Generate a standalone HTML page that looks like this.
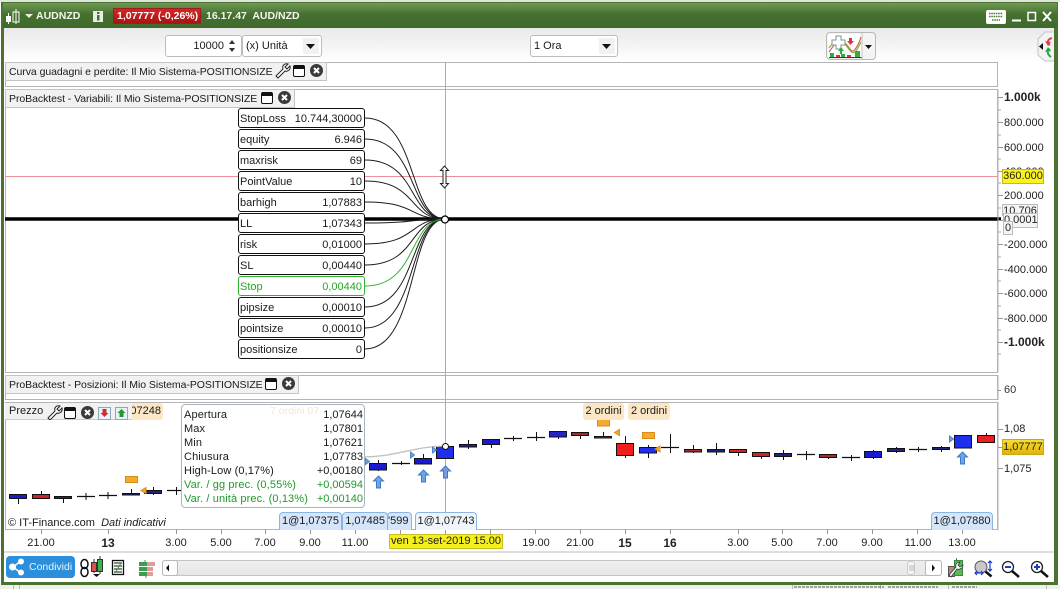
<!DOCTYPE html>
<html><head><meta charset="utf-8"><style>
html,body{margin:0;padding:0;background:#fff}
body{position:relative;width:1060px;height:589px;overflow:hidden;font-family:"Liberation Sans",sans-serif;font-size:10.5px;color:#1a1a1a}
div,span.t{position:absolute;box-sizing:border-box}
.t{white-space:nowrap;line-height:14px}
.h{letter-spacing:-.06px}
.o{font-size:11px;letter-spacing:.12px}
.v{font-size:11px}
.pan{background:#fff;border:1px solid #b4b4b4}
.hd{background:#f1f1f1;border:1px solid #c4c4c4;height:19px}
.box{left:238px;width:127px;height:20px;border:1px solid #111;border-radius:3px;background:#fff;line-height:20px;padding:0 2px 0 1px;font-size:11px}
.box b{font-weight:normal;float:right}
.ax{left:1004px;white-space:nowrap;line-height:14px;font-size:11px;color:#222}
.tm{top:536px;white-space:nowrap;line-height:14px;font-size:11px;color:#222;transform:translateX(-50%)}
.tag{height:18px;top:512px;background:#d5e5fa;border:1px solid #8ab4e6;border-bottom:0;border-radius:4px 4px 0 0;font-size:11px;line-height:17px;text-align:center;white-space:nowrap;overflow:hidden}
.ord{background:#fbe7c6;border-radius:3px;height:17px;line-height:16px;font-size:11px;text-align:center;white-space:nowrap}
.dd{background:#fff;border:1px solid #bdbdbd;border-radius:3px;height:22px;top:35px;line-height:20px;font-size:11px}
.tw{position:absolute}
</style></head><body>
<div style="left:0;top:0;width:1060px;height:2px;background:#dfe6da"></div>
<div style="left:1px;top:2px;width:1057px;height:583px;background:#4a7332"></div>
<div style="left:3px;top:3px;width:1054px;height:25px;background:linear-gradient(#6f9a54,#457030 45%,#3f6a2c)"></div>
<div style="left:4px;top:28px;width:1050px;height:554px;background:#fff"></div>
<div style="left:4px;top:28px;width:1050px;height:34px;background:linear-gradient(#e9e9e9,#fff)"></div>
<div style="left:0;top:585px;width:1060px;height:4px;background:#eef0ee"></div>
<svg class="tw" style="left:0;top:585px" width="1060" height="4"><path d="M13.500 0v4M19.500 0v4M792.500 0v4M880.500 0v4M948.500 0v4M1046.500 0v4" stroke="#bbb"/><path d="M794 2h90M888 2h50M952 2h25" stroke="#555" stroke-dasharray="3 1"/></svg>

<!-- title -->
<svg class="tw" style="left:0;top:0" width="1060" height="30">
<rect x="6" y="16" width="5" height="6" fill="#fff"/><rect x="13" y="12" width="6" height="10" fill="none" stroke="#fff"/><path d="M8.500 13v11M16 9v15" stroke="#fff"/>
<path d="M25 14h8l-4 4z" fill="#e8f0e4"/>
<rect x="93" y="11" width="10" height="11" fill="#e8ece4"/><rect x="97" y="12" width="2.500" height="2" fill="#457030"/><rect x="97" y="15" width="2.500" height="5.500" fill="#457030"/>
<rect x="986" y="10" width="20" height="14" rx="2" fill="#fff"/><path d="M989 13.500h14M989 16.500h14M992 20h8" stroke="#4a7332" stroke-width="1.500" stroke-dasharray="1.500 .8"/>
<path d="M1012 20.500h9" stroke="#fff" stroke-width="2"/><rect x="1028" y="12.500" width="7.500" height="8" fill="none" stroke="#fff" stroke-width="1.500"/><path d="M1043 12l8 9M1051 12l-8 9" stroke="#fff" stroke-width="2"/>
</svg>
<span class="t" style="left:36px;top:9px;color:#f2f6ee;font-weight:bold;font-size:10.500px">AUDNZD</span>
<div style="left:113px;top:8px;width:88px;height:16px;background:linear-gradient(#d92424,#a81414);border:1px solid #9a2020"></div>
<span class="t" style="left:117px;top:9px;color:#fff;font-weight:bold;font-size:10.500px">1,07777 (-0,26%)</span>
<span class="t" style="left:206px;top:9px;color:#f2f6ee;font-weight:bold;font-size:10.500px">16.17.47&nbsp; AUD/NZD</span>

<!-- toolbar -->
<div class="dd" style="left:165px;width:77px;text-align:right;padding-right:17px">10000</div>
<svg class="tw" style="left:226px;top:38px" width="12" height="16"><path d="M3 6l3-4 3 4zM3 10l3 4 3-4z" fill="#333"/></svg>
<div class="dd" style="left:242px;width:80px;padding-left:3px">(x) Unità</div>
<div class="dd" style="left:530px;width:88px;padding-left:3px">1 Ora</div>
<div style="left:303px;top:38px;width:16px;height:16px;background:#f1f1f1"></div>
<div style="left:599px;top:38px;width:16px;height:16px;background:#f1f1f1"></div>
<svg class="tw" style="left:303px;top:38px" width="16" height="16"><path d="M3 6h9l-4.500 5z" fill="#111"/></svg>
<svg class="tw" style="left:599px;top:38px" width="16" height="16"><path d="M3 6h9l-4.500 5z" fill="#111"/></svg>
<div style="left:826px;top:32px;width:50px;height:28px;background:#f4f4f4;border:1px solid #b8b8b8;border-radius:4px"></div>
<svg class="tw" style="left:826px;top:32px" width="52" height="28">
<rect x="2" y="2" width="34" height="24" fill="#fff"/>
<path d="M3 20C10 10 14 5 20 12S26 22 30 16 34 8 35 5" fill="none" stroke="#c46a5a" stroke-width="1.200"/>
<path d="M3 16C10 6 16 7 22 16S30 20 35 10" fill="none" stroke="#8fae4a" stroke-width="1.200"/>
<path d="M6 8h4V4h5v4h4v5h-4v4h-5v-4H6z" fill="#fff" stroke="#7a9a88"/>
<path d="M23 6h3v3h2l-3.500 4-3.500-4h2z" fill="#d43a3a"/><path d="M12 16h2l-3-4-3 4h2v3h2z" transform="translate(4 3)" fill="#2fae3f"/>
<rect x="4" y="21" width="4" height="4" fill="#2fae3f"/><rect x="10" y="23" width="4" height="2" fill="#d43a3a"/><rect x="15" y="22" width="4" height="3" fill="#2fae3f"/><rect x="21" y="23" width="4" height="2" fill="#d43a3a"/><rect x="29" y="19" width="5" height="6" fill="#2fae3f"/>
<path d="M3 25.500h33" stroke="#2a2ab0"/>
<path d="M36 1v26" stroke="#c4c4c4"/><path d="M39 13h7l-3.500 4z" fill="#111"/>
</svg>
<svg class="tw" style="left:1036px;top:31px" width="18" height="31">
<path d="M18 1L9 1 2 8v16l7 6h9" fill="#f3f3f3" stroke="#c4c4c4"/>
<path d="M7 12v7l-4-3.500z" fill="#111"/>
<path d="M14 14C10 12 12 8 16 7" fill="none" stroke="#d44" stroke-width="2"/><path d="M9 10l3 5 3-4z" fill="#d44"/>
<path d="M14 18C10 20 12 24 15 26" fill="none" stroke="#2a4" stroke-width="2"/><path d="M9 21l3-5 3 4z" fill="#2a4"/>
</svg>

<!-- panels -->
<div class="pan" style="left:5px;top:62px;width:993px;height:25px"></div>
<div class="pan" style="left:5px;top:89px;width:993px;height:284px"></div>
<div class="pan" style="left:5px;top:375px;width:993px;height:25px"></div>
<div class="pan" style="left:5px;top:402px;width:993px;height:128px"></div>
<div style="left:445px;top:62px;width:1px;height:467px;background:#ec8f96"></div>
<div style="left:5px;top:176px;width:993px;height:1px;background:#ec8f96"></div>

<!-- main chart svg -->
<svg class="tw" style="left:0;top:0" width="1060" height="589">
<path d="M5 219H1001" stroke="#000" stroke-width="3.500"/>
<!-- curves -->
<g fill="none" stroke="#1c1c1c" stroke-width="1">
<path d="M365 118C418 118 408 219 445 219"/><path d="M365 139C418 139 408 219 445 219"/><path d="M365 160C418 160 408 219 445 219"/><path d="M365 181C418 181 408 219 445 219"/><path d="M365 202C418 202 408 219 445 219"/><path d="M365 223C418 223 408 219 445 219"/><path d="M365 244C418 244 408 219 445 219"/><path d="M365 265C418 265 408 219 445 219"/><path d="M365 307C418 307 408 219 445 219"/><path d="M365 328C418 328 408 219 445 219"/><path d="M365 349C418 349 408 219 445 219"/>
<path d="M365 286C418 286 408 219 445 219" stroke="#2db52d"/>
</g>
<circle cx="445" cy="219.500" r="3.500" fill="#fff" stroke="#000" stroke-width="1.300"/>
<path d="M444.500 166l4 4.500h-2.500v13h2.500l-4 4.500-4-4.500h2.500v-13h-2.500z" fill="#fff" stroke="#222"/>
<!-- axis ticks -->
<path d="M998 89V372M998 375V400M998 402V530" stroke="#b4b4b4"/>
<path d="M998 97.500h5M998 122.500h5M998 147.500h5M998 171.500h5M998 195.500h5M998 220.500h5M998 244.500h5M998 269.500h5M998 293.500h5M998 318.500h5M998 342.500h5M998 429.500h5M998 468.500h5M998 447.500h4M998 390.500h3" stroke="#999"/>
<path d="M998 110h3M998 135h3M998 159h3M998 183h3M998 208h3M998 232h3M998 257h3M998 281h3M998 306h3M998 330h3M998 354h3" stroke="#aaa"/>
<!-- time ticks -->
<path d="M41.500 529v5M108.500 529v5M176.500 529v5M221.500 529v5M265.500 529v5M310.500 529v5M355.500 529v5M400.500 529v5M445.500 529v5M490.500 529v5M535.500 529v5M580.500 529v5M625.500 529v5M670.500 529v5M738.500 529v5M782.500 529v5M827.500 529v5M872.500 529v5M917.500 529v5M962.500 529v5" stroke="#999"/>
<path d="M4 552H1054" stroke="#bdbdbd"/>
<!-- candles -->
<g stroke="#101010" stroke-width="1">
<path d="M18.500 498v6M41.500 491v4M63.500 498v5M86 493v7M108 492v7M131.500 489v5M153.500 487v8M176.500 487v8M378.500 460v11M401.500 461v4M423.500 454v10M468.500 440v9M491.500 444v4M513.500 436v5M536.500 432v9M558.500 436v3M580.500 435v4M603.500 432v5M625.500 436v22M648.500 445v13M670.500 434v19M693.500 445v8M716.500 443v12M738.500 451v5M761.500 456v3M783.500 450v10M806.500 451v9M828.500 456v3M851.500 455v6M873.500 450v9M896.500 447v6M918.500 447v5M941.500 446v6M986.500 433v3M445.500 445v2"/>
<path d="M77 496.500h18M99 495.500h18M167 490.500h18M392 463.500h18M504 438.500h18M527 437.500h18M661 447.500h18M797 454.500h18M842 457.500h18M909 449.500h18" stroke-width="1.300"/>
</g>
<g stroke="#111" stroke-width="1">
<g fill="#1a1ad0"><rect x="9.500" y="494.500" width="17" height="4"/><rect x="369.500" y="463.500" width="17" height="6.500"/><rect x="414.500" y="458.500" width="17" height="5.500"/><rect x="436.500" y="446.500" width="17" height="12" fill="#1f2ff0"/><rect x="482.500" y="439.500" width="17" height="5"/><rect x="549.500" y="431.500" width="17" height="5.500" fill="#2323c8"/><rect x="639.500" y="447.500" width="17" height="5.500" fill="#1f2ff0"/><rect x="864.500" y="451.500" width="17" height="6"/><rect x="954.500" y="435.500" width="17" height="12.500" fill="#1f2ff0"/></g>
<g fill="#1f2480"><rect x="54.500" y="496.500" width="17" height="2"/><rect x="122.500" y="493.500" width="17" height="1.500"/><rect x="144.500" y="490.500" width="17" height="3"/><rect x="459.500" y="444.500" width="17" height="2.500"/><rect x="707.500" y="449.500" width="17" height="2.500"/><rect x="774.500" y="453.500" width="17" height="3"/><rect x="887.500" y="448.500" width="17" height="3"/><rect x="932.500" y="447.500" width="17" height="2"/></g>
<g fill="#d42222"><rect x="32.500" y="494.500" width="17" height="4"/><rect x="616.500" y="443.500" width="17" height="12" fill="#f01f1f"/><rect x="977.500" y="435.500" width="17" height="7" fill="#f01f1f"/><rect x="752.500" y="452.500" width="17" height="4"/><rect x="729.500" y="449.500" width="17" height="3"/></g>
<g fill="#a82a2a"><rect x="571.500" y="432.500" width="17" height="3"/><rect x="594.500" y="436.500" width="17" height="1.500"/><rect x="684.500" y="449.500" width="17" height="2.500"/><rect x="819.500" y="454.500" width="17" height="3"/></g>
</g>
<path d="M364 457C400 456 410 447 445 446" fill="none" stroke="#c0c0c0" stroke-width="1.300"/>
<circle cx="445.500" cy="446.500" r="3" fill="#fff" stroke="#111"/>
<!-- orange -->
<g fill="#f5a92e" stroke="#d88c1a"><rect x="125.500" y="476.500" width="12" height="6"/><rect x="597.500" y="419" width="12" height="7"/><rect x="642.500" y="432.500" width="12" height="6"/>
<path d="M146 487.500v6l-5-3zM619.500 429.500v6l-5-3zM660 446v6l-5-3z"/></g>
<!-- blue tri -->
<g fill="#6aa5e8" stroke="#4a83c8"><path d="M365.500 458.500v6l4-3zM410.500 452v6l4-3zM432.500 447v6l4-3zM949.500 436v6l4-3z"/></g>
<!-- arrows -->
<g fill="#6aa5ea" stroke="#3f78c4"><path d="M378.500 476l-5 5h3v7h4v-7h3z"/><path d="M423.500 470l-5 5h3v7h4v-7h3z"/><path d="M445.500 466l-5 5h3v7h4v-7h3z" fill="#7a9ae0"/><path d="M962.500 452l-5 5h3v7h4v-7h3z"/></g>
</svg>

<!-- panel headers -->
<div class="hd" style="left:5px;top:62px;width:322px"></div>
<span class="t h" style="left:9px;top:65px">Curva guadagni e perdite: Il Mio Sistema-POSITIONSIZE</span>
<div class="hd" style="left:5px;top:89px;width:290px"></div>
<span class="t h" style="left:9px;top:92px">ProBacktest - Variabili: Il Mio Sistema-POSITIONSIZE</span>
<div class="hd" style="left:5px;top:375px;width:294px"></div>
<span class="t h" style="left:9px;top:378px">ProBacktest - Posizioni: Il Mio Sistema-POSITIONSIZE</span>
<div class="ord" style="left:125px;top:403px;width:38px;text-align:right;padding-right:2px">07248</div>
<div class="hd" style="left:5px;top:403px;width:127px;height:17px;border:0;border-bottom:1px solid #ccc;background:#f1f1f1"></div>
<span class="t" style="left:9px;top:404px;font-size:11px">Prezzo</span>
<svg class="tw" style="left:0;top:60px" width="340" height="360">
<defs><g id="w"><path d="M1 13L8 6C7 3 9 0 13 1L10 4l2 2 3-3C16 7 12 9 10 8L3 15z" fill="#fff" stroke="#222" stroke-width="1"/></g>
<g id="s"><rect x=".5" y=".5" width="11" height="11" rx="1.500" fill="#fff" stroke="#111"/><rect x="1" y="1" width="10" height="3" fill="#111"/></g>
<g id="x"><circle cx="6.500" cy="6.500" r="6.500" fill="#3a3a3a"/><path d="M4 4l5 5M9 4l-5 5" stroke="#fff" stroke-width="2"/></g></defs>
<use href="#w" x="275" y="3"/><use href="#s" x="293" y="5"/><use href="#x" x="310" y="4"/>
<use href="#s" x="261" y="32"/><use href="#x" x="278" y="31"/>
<use href="#s" x="265" y="318"/><use href="#x" x="282" y="317"/>
<use href="#w" x="47" y="345"/><use href="#s" x="64" y="347"/><use href="#x" x="81" y="346"/>
<rect x="98.500" y="347.500" width="12" height="12" fill="#e8f0fa" stroke="#8ab"/><path d="M102.500 349h4v4h2l-4 4-4-4h2z" fill="#d62a2a"/>
<rect x="115.500" y="347.500" width="12" height="12" fill="#e8f0fa" stroke="#8ab"/><path d="M121.500 349l4 4h-2v4h-4v-4h-2z" fill="#1f9a2a"/>
</svg>

<!-- variable boxes -->
<div class="box" style="top:108px">StopLoss<b>10.744,30000</b></div>
<div class="box" style="top:129px">equity<b>6.946</b></div>
<div class="box" style="top:150px">maxrisk<b>69</b></div>
<div class="box" style="top:171px">PointValue<b>10</b></div>
<div class="box" style="top:192px">barhigh<b>1,07883</b></div>
<div class="box" style="top:213px">LL<b>1,07343</b></div>
<div class="box" style="top:234px">risk<b>0,01000</b></div>
<div class="box" style="top:255px">SL<b>0,00440</b></div>
<div class="box" style="top:276px;border-color:#2db52d;color:#22aa22">Stop<b>0,00440</b></div>
<div class="box" style="top:297px">pipsize<b>0,00010</b></div>
<div class="box" style="top:318px">pointsize<b>0,00010</b></div>
<div class="box" style="top:339px">positionsize<b>0</b></div>

<!-- y axis -->
<div class="ax" style="top:90px;font-weight:bold;font-size:12px">1.000k</div>
<div class="ax" style="top:116px">800.000</div>
<div class="ax" style="top:141px">600.000</div>
<div class="ax" style="top:165px">400.000</div>
<div class="ax" style="top:189px">200.000</div>
<div class="ax" style="top:238px">-200.000</div>
<div class="ax" style="top:263px">-400.000</div>
<div class="ax" style="top:287px">-600.000</div>
<div class="ax" style="top:312px">-800.000</div>
<div class="ax" style="top:335px;font-weight:bold;font-size:12px">-1.000k</div>
<div class="ax" style="left:1002px;top:169px;width:42px;height:15px;background:#fbf21e;border:1px solid #c8b820;line-height:13px;font-size:11px;text-align:center">360.000</div>
<div class="ax" style="left:1002px;top:204px;width:36px;height:12px;background:#f4f4f4;border:1px solid #bbb;line-height:13px;text-align:center;overflow:hidden">10.706</div>
<div class="ax" style="left:1003px;top:213px;width:35px;height:15px;background:#f4f4f4;border:1px solid #bbb;line-height:13px;text-align:right;padding-right:1px">0,0001</div>
<div class="ax" style="left:1003px;top:221px;width:10px;height:14px;background:#f4f4f4;border:1px solid #bbb;line-height:12px;text-align:center">0</div>
<div class="ax" style="top:383px;color:#333">60</div>
<div class="ax" style="top:422px">1,08</div>
<div class="ax" style="top:462px">1,075</div>
<div class="ax" style="left:1002px;top:439px;width:42px;height:16px;background:linear-gradient(#f8dd2c,#e0b40c);border:1px solid #c8a820;line-height:14px;text-align:center">1,07777</div>

<!-- order labels -->
<div class="ord" style="left:583px;top:403px;width:41px">2 ordini</div>
<div class="ord" style="left:628px;top:403px;width:42px">2 ordini</div>

<!-- tags -->
<div class="tag" style="left:387px;width:25px;text-align:right;padding-right:3px">'599</div>
<div class="tag" style="left:342px;width:46px;text-align:right;padding-right:2px">1,07485</div>
<div class="tag" style="left:279px;width:63px">1@1,07375</div>
<div class="tag" style="left:415px;width:62px;background:#f0f5fc">1@1,07743</div>
<div class="tag" style="left:931px;width:62px">1@1,07880</div>

<!-- OHLC tooltip -->
<div style="left:181px;top:404px;width:184px;height:104px;background:#fff;border:1px solid #a8b4c0;border-radius:4px"></div>
<span class="t o" style="left:184px;top:408px">Apertura</span><span class="t v" style="right:697px;top:408px">1,07644</span>
<span class="t o" style="left:184px;top:422px">Max</span><span class="t v" style="right:697px;top:422px">1,07801</span>
<span class="t o" style="left:184px;top:436px">Min</span><span class="t v" style="right:697px;top:436px">1,07621</span>
<span class="t o" style="left:184px;top:450px">Chiusura</span><span class="t v" style="right:697px;top:450px">1,07783</span>
<span class="t o" style="left:184px;top:464px">High-Low (0,17%)</span><span class="t v" style="right:697px;top:464px">+0,00180</span>
<span class="t o" style="left:184px;top:478px;color:#1f9a2a">Var. / gg prec. (0,55%)</span><span class="t v" style="right:697px;top:478px;color:#1f9a2a">+0,00594</span>
<span class="t o" style="left:184px;top:492px;color:#1f9a2a">Var. / unità prec. (0,13%)</span><span class="t v" style="right:697px;top:492px;color:#1f9a2a">+0,00140</span>
<span class="t" style="left:270px;top:404px;color:#eee8da">7 ordini 07</span>

<span class="t" style="left:8px;top:516px;font-size:11px">© IT-Finance.com&nbsp; <i>Dati indicativi</i></span>

<!-- time labels -->
<div class="tm" style="left:41px">21.00</div><div class="tm" style="left:108px;font-weight:bold;font-size:12px">13</div><div class="tm" style="left:176px">3.00</div><div class="tm" style="left:221px">5.00</div><div class="tm" style="left:265px">7.00</div><div class="tm" style="left:310px">9.00</div><div class="tm" style="left:355px">11.00</div><div class="tm" style="left:536px">19.00</div><div class="tm" style="left:580px">21.00</div><div class="tm" style="left:625px;font-weight:bold;font-size:12px">15</div><div class="tm" style="left:670px;font-weight:bold;font-size:12px">16</div><div class="tm" style="left:738px">3.00</div><div class="tm" style="left:782px">5.00</div><div class="tm" style="left:827px">7.00</div><div class="tm" style="left:872px">9.00</div><div class="tm" style="left:918px">11.00</div><div class="tm" style="left:962px">13.00</div>
<div style="left:389px;top:534px;width:114px;height:15px;background:#f5f01c;border:1px solid #c8c020;line-height:13px;font-size:11px;text-align:center;white-space:nowrap">ven 13-set-2019 15.00</div>

<!-- bottom bar -->
<div style="left:6px;top:556px;width:69px;height:22px;background:#2b8fdc;border-radius:4px"></div>
<svg class="tw" style="left:6px;top:556px" width="22" height="22"><path d="M15 5L7 11l8 6" fill="none" stroke="#fff" stroke-width="1.500"/><circle cx="15" cy="5.500" r="3" fill="#fff"/><circle cx="6.500" cy="11" r="3.500" fill="#fff"/><circle cx="15" cy="16.500" r="3" fill="#fff"/></svg>
<span class="t" style="left:29px;top:560px;color:#eaf4fc">Condividi</span>
<svg class="tw" style="left:78px;top:556px" width="90" height="24">
<ellipse cx="6.500" cy="8" rx="3.500" ry="4.500" fill="none" stroke="#111" stroke-width="1.500"/><ellipse cx="6.500" cy="16" rx="3.500" ry="4.500" fill="none" stroke="#111" stroke-width="1.500"/>
<rect x="13.500" y="6.500" width="5" height="9" fill="#e05050" stroke="#333"/><rect x="19.500" y="3.500" width="5" height="12" fill="#3bb54a" stroke="#333"/><path d="M16 3v3M16 15v2M22 0v3M22 15v3" stroke="#333"/><path d="M15 18h7l-3.500 3z" fill="#111"/>
<rect x="34.500" y="4.500" width="11" height="14" fill="#fff" stroke="#111" stroke-width="1.300"/><path d="M36 7h8M36 10h8M36 13h8M36 16h8" stroke="#111"/><path d="M37 17l6-10" stroke="#2a2"/>
<path d="M61 6h8v4h-8zM61 11h8v4h-8zM61 16h8v4h-8z" fill="#3c9c50"/><path d="M69 6h8v4h-8zM69 11h6v4h-6zM69 16h6v4h-6z" fill="#e09a9a"/><path d="M67 4v2M68 20v2" stroke="#2f9a4a"/>
</svg>
<div style="left:162px;top:560px;width:780px;height:16px;background:linear-gradient(#efefef,#e6e6e6);border:1px solid #c4c4c4;border-radius:3px"></div>
<div style="left:162px;top:560px;width:16px;height:16px;background:#fff;border:1px solid #b8b8b8;border-radius:3px"></div>
<div style="left:907px;top:561px;width:8px;height:14px;background:#f4f4f4;border:1px solid #ccc;border-radius:3px"></div>
<div style="left:925px;top:560px;width:17px;height:16px;background:#fff;border:1px solid #b8b8b8;border-radius:3px"></div>
<svg class="tw" style="left:162px;top:560px" width="790" height="16"><path d="M770 4.500v7l3-3.500z" fill="#111"/><path d="M7 4.500v7l-3-3.500z" fill="#111"/><path d="M747 6h6M747 8h6M747 10h6" stroke="#bbb"/></svg>
<svg class="tw" style="left:945px;top:555px" width="110" height="26">
<rect x="3.500" y="11.500" width="6" height="10" fill="#b08a80" stroke="#555"/><rect x="9.500" y="5.500" width="8" height="15" fill="#58b85a" stroke="#3a8a3a"/><path d="M11.500 3v3M6 22v-2" stroke="#3a8a3a"/><path d="M4 20l7-8c-1-3 1-5 4-5l-2 3 2 2 3-2c0 3-3 5-6 4l-6 8z" fill="#fff" stroke="#333" stroke-width=".8"/>
<circle cx="36" cy="12" r="6" fill="#c8c8c8" stroke="#555"/><path d="M40.500 16.500l6 5" stroke="#111" stroke-width="2.500"/><path d="M45 6v10M43 8l2-2 2 2M43 14l2 2 2-2M30 18h8M32 16l-2 2 2 2M36 16l2 2-2 2" fill="none" stroke="#1a3ec8" stroke-width="1.200"/>
<circle cx="63" cy="12" r="5.500" fill="#fff" stroke="#222" stroke-width="1.300"/><path d="M60 12h6" stroke="#1a3ec8" stroke-width="2"/><path d="M67 16l7 6" stroke="#111" stroke-width="2.500"/>
<circle cx="92" cy="12" r="5.500" fill="#fff" stroke="#222" stroke-width="1.300"/><path d="M89 12h6M92 9v6" stroke="#1a3ec8" stroke-width="2"/><path d="M96 16l7 6" stroke="#111" stroke-width="2.500"/>
</svg>
</body></html>
